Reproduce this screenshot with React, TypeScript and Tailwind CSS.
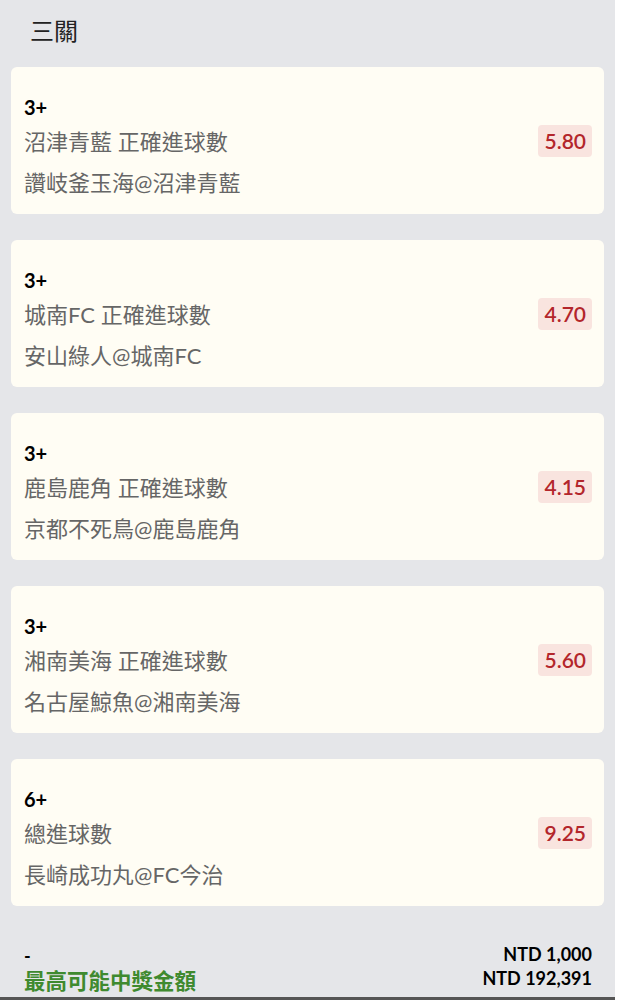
import React from 'react';

interface Leg {
    pick: string;
    market: string;
    match: string;
    odds: string;
}

const legs: Leg[] = [
    { pick: '3+', market: '沼津青藍 正確進球數', match: '讚岐釜玉海@沼津青藍', odds: '5.80' },
    { pick: '3+', market: '城南FC 正確進球數', match: '安山綠人@城南FC', odds: '4.70' },
    { pick: '3+', market: '鹿島鹿角 正確進球數', match: '京都不死鳥@鹿島鹿角', odds: '4.15' },
    { pick: '3+', market: '湘南美海 正確進球數', match: '名古屋鯨魚@湘南美海', odds: '5.60' },
    { pick: '6+', market: '總進球數', match: '長崎成功丸@FC今治', odds: '9.25' },
];

const LegCard: React.FC<{ leg: Leg }> = ({ leg }) => (
    <div className="flex items-center justify-between rounded-md bg-[#fffdf4] pl-[13px] pr-[12px] pt-[27px] pb-[12px]">
        <div className="flex flex-col">
            <span className="text-[20px] leading-[26px] font-bold text-black">{leg.pick}</span>
            <span className="text-[22px] leading-[44px] text-[#666]">{leg.market}</span>
            <span className="text-[22px] leading-[38px] text-[#666]">{leg.match}</span>
        </div>
        <div className="-mt-[15px] rounded-[4px] bg-[#f9e4df] px-[6px] text-[21px] leading-[32px] font-semibold text-[#b3262b]">
            {leg.odds}
        </div>
    </div>
);

export default function App() {
    return (
        <div className="flex min-h-[1000px] w-[625px] bg-white font-[Lato,'Noto_Sans_CJK_TC',sans-serif]">
            <div className="flex w-[615px] flex-col bg-[#e5e6e9] px-[11px] border-b-[3px] border-[#555]">
                <div className="flex h-[67px] items-center pl-[19px] pb-[6px]">
                    <span className="text-[24px] font-normal text-[#222]">三關</span>
                </div>
                <div className="flex flex-col gap-[26px]">
                    {legs.map((leg, index) => (
                        <LegCard key={index} leg={leg} />
                    ))}
                </div>
                <div className="mt-[36px] flex items-end justify-between pl-[13px] pr-[12px]">
                    <div className="flex flex-col">
                        <span className="text-[18px] leading-[24px] font-bold text-black">-</span>
                        <span className="text-[21.5px] leading-[26px] font-bold text-[#3f8a2f]">最高可能中獎金額</span>
                    </div>
                    <div className="flex flex-col items-end pb-[4px]">
                        <span className="text-[18px] leading-[24px] font-bold text-black">NTD 1,000</span>
                        <span className="text-[18px] leading-[24px] font-bold text-black">NTD 192,391</span>
                    </div>
                </div>
            </div>
        </div>
    );
}
